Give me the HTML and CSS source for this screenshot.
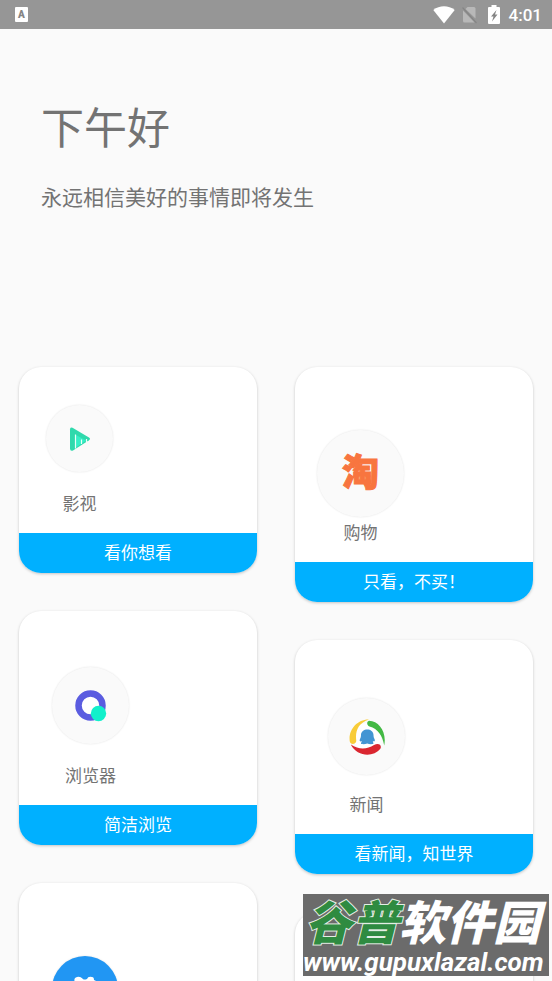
FILE: index.html
```
<!DOCTYPE html>
<html lang="zh-CN">
<head>
<meta charset="utf-8">
<meta name="viewport" content="width=device-width, initial-scale=1">
<title>下午好</title>
<link rel="stylesheet" href="styles.css">
</head>
<body>
<div class="screen">
  <div class="status">
    <span class="badge">A</span>
    <div class="status-right">
      <svg class="wifi" width="22" height="18" viewBox="0 0 22 18"><path fill="#fff" d="M11 17.500L.3 4C6.500-1 15.500-1 21.700 4z"/></svg>
      <svg class="sim" width="15" height="18" viewBox="0 0 15 18"><path fill="#b8b8b8" d="M5.500 1H12q1.500 0 1.500 1.500V12.500L3.500 3zM1 4.500L12.500 16.500H2.500Q1 16.500 1 15z"/><path d="M.5 1.500L14.500 17" stroke="#858585" stroke-width="1.200"/></svg>
      <svg class="battery" width="12" height="19" viewBox="0 0 12 19"><path fill="#fff" d="M3.500 0h5v2H11q1 0 1 1v15q0 1-1 1H1q-1 0-1-1V3q0-1 1-1h2.500z"/><path fill="#858585" d="M8.500 5L3 11.500h2.500L4 16.500 9.500 9.500H7z"/></svg>
      <span class="clock">4:01</span>
    </div>
  </div>

  <header class="greeting">
    <h1>下午好</h1>
    <p>永远相信美好的事情即将发生</p>
  </header>

  <main class="columns">
    <div class="column">
      <a class="card video" href="#video">
        <span class="app">
          <span class="disc">
            <svg width="22" height="26" viewBox="0 0 22 26"><path fill="#2fd9ac" d="M1 3.500Q1 .5 3.500 1.800L20 11.500q2 1.300 0 2.700L4 24.500Q1 25.500 1 22.500z"/><path fill="#35efc6" d="M7 9l10 5.500-10 7z"/><path fill="none" stroke="#e9fff8" stroke-width="1.200" d="M6.500 8.500V22.500M12.500 13.500v4.500M17.500 13v3"/></svg>
          </span>
          <span class="name">影视</span>
        </span>
        <span class="caption">看你想看</span>
      </a>
      <a class="card browser" href="#browser">
        <span class="app">
          <span class="disc">
            <svg width="32" height="32" viewBox="0 0 32 32"><circle cx="15.500" cy="15.500" r="12" fill="#fff" stroke="#5a5ce0" stroke-width="6.500"/><circle cx="23.500" cy="23.500" r="7.700" fill="#12f0cb"/></svg>
          </span>
          <span class="name">浏览器</span>
        </span>
        <span class="caption">简洁浏览</span>
      </a>
      <a class="card more" href="#more" aria-label="更多">
        <span class="app">
          <span class="disc">
            <svg width="26" height="26" viewBox="0 0 26 26"><path fill="#fff" d="M3 6Q1 2 5 1q3-1 6 2 1 1 4 0 1-3 5-2 2 0 2 3 4 1 2 5l-4 12H7z"/></svg>
          </span>
        </span>
      </a>
    </div>

    <div class="column">
      <a class="card shop" href="#shop">
        <span class="app">
          <span class="disc"><span class="tao">淘</span></span>
          <span class="name">购物</span>
        </span>
        <span class="caption">只看，不买！</span>
      </a>
      <a class="card news" href="#news">
        <span class="app">
          <span class="disc">
            <svg width="36" height="36" viewBox="0 0 36 36"><circle cx="18" cy="18" r="14" fill="#fff"/><path fill="#f8cc38" d="M20 .4C8 0-1 11 .8 22.500c.6 3.500 6 3 6.500-.5C6 12 9 4 20 .4z"/><path fill="#43b944" d="M20 1.700C30 2 38 13 35.200 26.500 33.500 17 29 9.500 20.500 7.500 17.500 6 17.500 2.500 20 1.700z"/><path fill="#da2630" d="M1.800 25.500C10 31 18 30.500 25 26c4.500-2.500 8 0 6.500 3.500C24 39 8 37.500 1.800 25.500z"/><path fill="#4395d3" d="M12 16c0-7.500 12.500-7.500 12.500 0 0 2 .5 3 1 4 1 2-.2 3-1.500 2-.3 1.300 0 1 .5 2 .5 1.500-4 1.500-6.300.5-2.200 1-6.700 1-6.200-.5.500-1 .8-.7.500-2-1.300 1-2.500 0-1.500-2 .5-1 1-2 1-4z"/></svg>
          </span>
          <span class="name">新闻</span>
        </span>
        <span class="caption">看新闻，知世界</span>
      </a>
      <div class="card more"></div>
    </div>
  </main>

  <div class="watermark">
    <div class="brand"><span>谷普</span>软件园</div>
    <div class="site">www.gupuxlazal.com</div>
  </div>
</div>
</body>
</html>
```
FILE: styles.css
```
* { box-sizing: border-box; }

body {
  margin: 0;
  background: #fafafa;
  color: #737373;
  font-family: Roboto, "Noto Sans CJK SC", sans-serif;
}

.screen {
  position: relative;
  height: 100vh;
  overflow: hidden;
}

.status {
  display: flex;
  align-items: center;
  justify-content: space-between;
  height: 29px;
  padding: 0 10px 0 15px;
  background: #969696;
  color: #fff;
}

.badge {
  width: 13px;
  height: 15px;
  border-radius: 1px;
  background: #fff;
  color: #858585;
  font-size: 10px;
  font-weight: 900;
  line-height: 15px;
  text-align: center;
}

.status-right { display: flex; align-items: center; }
.sim { margin-left: 7px; }
.battery { margin-left: 11px; }
.clock { margin-left: 9px; font-size: 17px; font-weight: 500; line-height: 31px; padding-top: 1px; }

.greeting { padding: 68px 41px 0; height: 338px; }

h1 {
  margin: 0;
  font-size: 43px;
  font-weight: 400;
  line-height: 64px;
}

.greeting p {
  margin: 21px 0 0;
  font-size: 21px;
  line-height: 32px;
}

.columns {
  display: flex;
  align-items: flex-start;
  gap: 38px;
  padding: 0 19px;
}

.column {
  flex: 1;
  display: flex;
  flex-direction: column;
  gap: 38px;
}

.card {
  display: block;
  overflow: hidden;
  border-radius: 22px;
  background: #fff;
  box-shadow: 0 1px 3px rgba(0, 0, 0, 0.22);
  color: inherit;
  text-decoration: none;
}

.app {
  display: flex;
  flex-direction: column;
  align-items: center;
  width: fit-content;
  padding-bottom: 17px;
}

.disc {
  display: flex;
  align-items: center;
  justify-content: center;
  width: 77px;
  height: 77px;
  border-radius: 50%;
  background: #fafafa;
  box-shadow: 0 0 2px rgba(0, 0, 0, 0.12);
}

.name { margin-top: 20px; font-size: 17px; line-height: 24px; }

.caption {
  display: block;
  padding-top: 1px;
  background: #00b0ff;
  color: #fff;
  font-size: 17px;
  line-height: 39px;
  text-align: center;
}

.video .app { margin: 38px 0 0 27px; }
.video .disc { width: 67px; height: 67px; }

.shop .app { margin: 63px 0 0 22px; }
.shop .disc { width: 87px; height: 87px; }
.shop .name { margin-top: 4px; }

.browser .app { margin: 56px 0 0 33px; }

.news .app { margin: 58px 0 0 33px; }
.news .name { margin-top: 18px; }

.more { height: 234px; }
.more .app { margin: 73px 0 0 33px; }
.more .disc { width: 66px; height: 66px; background: #2196f3; }

.tao {
  color: #f8753f;
  font-size: 37px;
  font-weight: 900;
  line-height: 40px;
  -webkit-text-stroke: 1px #f8753f;
  stroke-linejoin: round;
}

.watermark {
  position: absolute;
  right: 3px;
  bottom: 5px;
  width: 246px;
  height: 82px;
  background: #6b6b6b;
  color: #fff;
  white-space: nowrap;
}

.brand {
  padding: 5px 0 0 2px;
  font-size: 47px;
  font-style: italic;
  font-weight: 900;
  line-height: 50px;
}

.brand span {
  color: #2f8b41;
  -webkit-text-stroke: 2px #e4eee4;
  paint-order: stroke fill;
}

.site {
  font-size: 26px;
  font-style: italic;
  font-weight: 700;
  line-height: 26px;
}
```
